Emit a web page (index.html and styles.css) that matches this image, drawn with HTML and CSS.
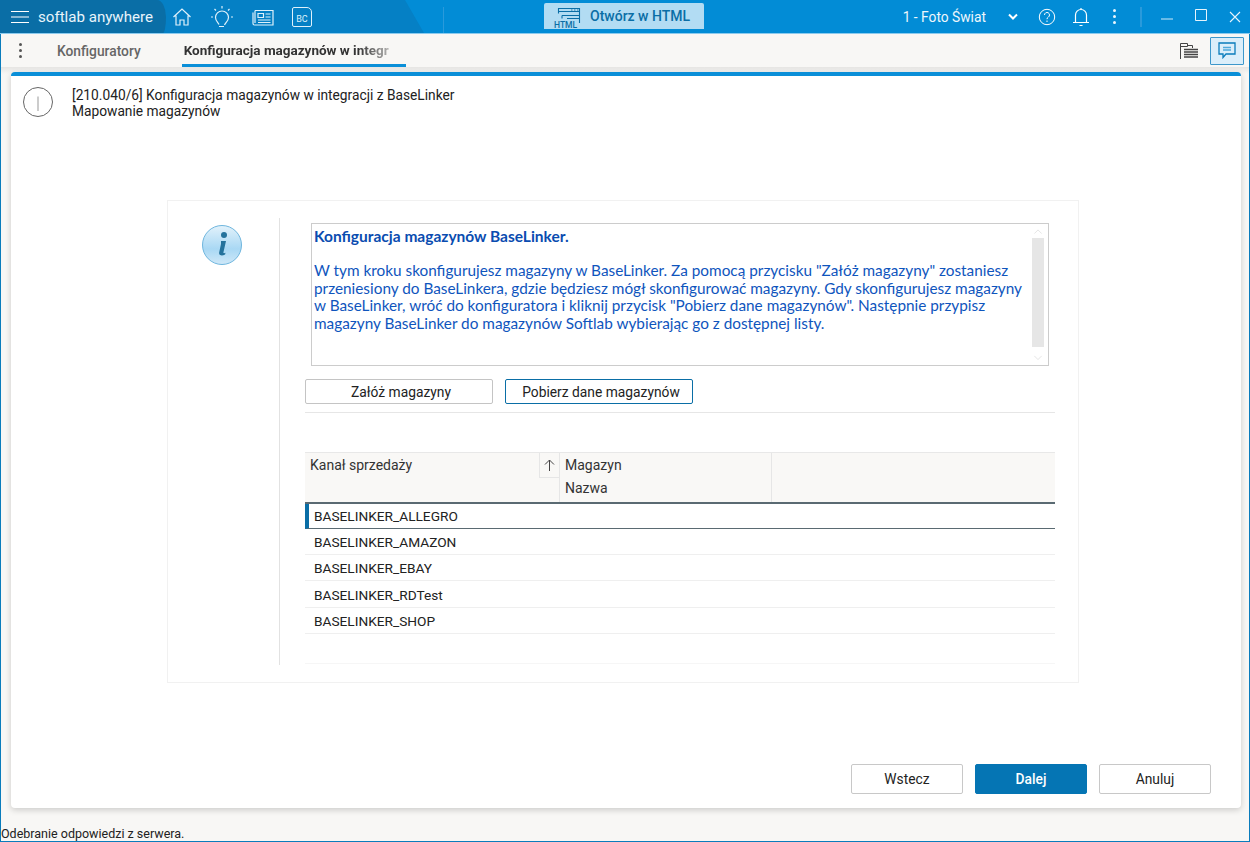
FILE: index.html
```html
<!DOCTYPE html>
<html lang="pl">
<head>
<meta charset="utf-8">
<title>softlab anywhere</title>
<link rel="stylesheet" href="styles.css">
</head>
<body>
<div class="app">
  <header class="titlebar">
    <div class="brand">
      <svg class="ic-menu" width="20" height="14" viewBox="0 0 20 14"><path d="M1 1.500h18M1 7h18M1 12.500h18" stroke="#fff" stroke-width="1.200" fill="none"/></svg>
      <span class="brand-name">softlab anywhere</span>
    </div>
    <nav class="quick">
      <svg width="20" height="20" viewBox="0 0 20 20" fill="none" stroke="#dff1fb" stroke-width="1.200"><path d="M1.500 10 10 2l8.500 8M4 8.500V18h4v-5h4v5h4V8.500"/></svg>
      <svg width="24" height="22" viewBox="0 0 24 22" fill="none" stroke="#dff1fb" stroke-width="1.200"><path d="M9 18.500c-.5-2-3.500-3.500-3.500-7a6.500 6.500 0 1 1 13 0c0 3.500-3 5-4 7.500"/><path d="M9 20.500h5M12 0v2.500M4.500 3 6 4.500M19.500 3 18 4.500M1 11h2M21 11h2"/></svg>
      <svg width="22" height="18" viewBox="0 0 22 18" fill="none" stroke="#dff1fb" stroke-width="1.200"><path d="M3 2.500h18v14.500H2.500a1.500 1.500 0 0 1-1.500-1.500V4.500M3 2.500V15"/><path d="M6 5.500h5.500v4H6zM13.500 6h5M13.500 9h5M6 12h12.500M6 14.500h12.500"/></svg>
      <span class="bc-icon"><span>BC</span></span>
    </nav>
    <div class="title-center">
      <button class="html-btn">
        <svg width="28" height="26" viewBox="0 0 28 26" fill="none" stroke="#0a6ea6" stroke-width="1.100"><path d="M5.500 10.500v-5h21V20M5.500 8.500h21M9 12.500h17.500M9 12.500v3M14 15.500h12.500"/><path d="M18 7h1.500M21 7h1.500M24 7h1.500" stroke-width=".9"/><text x="1" y="24.500" class="html-tag">HTML</text></svg>
        <span>Otwórz w HTML</span>
      </button>
    </div>
    <div class="title-right">
      <span class="company">1 - Foto Świat</span>
      <svg class="chev" width="10" height="7" viewBox="0 0 10 7"><path d="M1 1.500 5 5.500l4-4" fill="none" stroke="#fff" stroke-width="2"/></svg>
      <svg class="help" width="18" height="18" viewBox="0 0 18 18" fill="none" stroke="#fff" stroke-width="1"><circle cx="9" cy="9" r="7.700"/><path d="M6.500 7a2.500 2.500 0 1 1 3.800 2.100c-.9.600-1.300 1-1.300 2.100M9 12.500v1.500"/></svg>
      <svg class="bell" width="18" height="20" viewBox="0 0 18 20" fill="none" stroke="#fff" stroke-width="1.200"><path d="M3.500 15V8a5.500 5.500 0 0 1 11 0v7M1 15.500h16M7.500 18.500h3M9 1v1.500"/></svg>
      <span class="dots light"><i></i><i></i><i></i></span>
      <span class="sep"></span>
      <svg class="win min" width="12" height="12" viewBox="0 0 12 12"><path d="M0 11h12" stroke="#cfe9f8" stroke-width="1"/></svg>
      <svg class="win max" width="12" height="12" viewBox="0 0 12 12"><path d="M.5.500h11v11H.500z" fill="none" stroke="#e6f4fc" stroke-width="1"/></svg>
      <svg class="win cls" width="12" height="12" viewBox="0 0 12 12"><path d="M1 1l10 10M11 1 1 11" stroke="#e6f4fc" stroke-width="1.100"/></svg>
    </div>
  </header>

  <div class="tabbar">
    <span class="dots dark"><i></i><i></i><i></i></span>
    <a class="tab">Konfiguratory</a>
    <a class="tab active"><span>Konfiguracja magazynów w integr</span></a>
    <div class="tab-tools">
      <svg width="20" height="18" viewBox="0 0 20 18" fill="none" stroke="#444" stroke-width="1"><path d="M1.500 17V1.500h7v3H1.500M8.500 3.500h5v2.500"/><path d="M5 7.500h14M5 10h14M5 12.500h14M5 15h14" stroke-width="1.300"/></svg>
      <span class="chat-btn">
        <svg width="18" height="17" viewBox="0 0 18 17" fill="none" stroke="#0a7cbc" stroke-width="1.300"><path d="M1 1h16v11H8l-3 3.500V12H1z"/><path d="M5 5.500h8M5 8h8" stroke="#4fa9db" stroke-width="1.500"/></svg>
      </span>
    </div>
  </div>

  <main class="workspace">
    <section class="card">
      <div class="card-head">
        <svg width="32" height="32" viewBox="0 0 32 32" fill="none"><circle cx="16" cy="16" r="14.500" stroke="#666" stroke-width="1"/><path d="M16 10.500V25" stroke="#999" stroke-width="1"/></svg>
        <div class="card-title">
          <div>[210.040/6] Konfiguracja magazynów w integracji z BaseLinker</div>
          <div>Mapowanie magazynów</div>
        </div>
      </div>
      <div class="card-body">
        <div class="panel">
          <div class="panel-side">
            <svg width="42" height="42" viewBox="0 0 42 42">
              <defs>
                <linearGradient id="ig" x1="0" y1="0" x2="0" y2="1"><stop offset="0" stop-color="#e3f2fb"/><stop offset=".6" stop-color="#a9d8f4"/><stop offset="1" stop-color="#cfe8f8"/></linearGradient>
              </defs>
              <circle cx="21" cy="21" r="19.500" fill="url(#ig)" stroke="#6fb6de" stroke-width="1"/>
              <circle cx="23" cy="11" r="3" fill="#24729c"/>
              <path d="M20 17h5l-2.500 11c-.3 1.300.5 1.500 2 .8l-.4 1.700c-3 1.500-6.300 1.200-6-1.800L20 20z" fill="#24729c"/>
            </svg>
          </div>
          <div class="panel-main">
            <div class="note">
              <div class="note-text">
                <p class="note-title">Konfiguracja magazynów BaseLinker.</p>
                <p>W tym kroku skonfigurujesz magazyny w BaseLinker. Za pomocą przycisku "Załóż magazyny" zostaniesz<br>przeniesiony do BaseLinkera, gdzie będziesz mógł skonfigurować magazyny. Gdy skonfigurujesz magazyny<br>w BaseLinker, wróć do konfiguratora i kliknij przycisk "Pobierz dane magazynów". Następnie przypisz<br>magazyny BaseLinker do magazynów Softlab wybierając go z dostępnej listy.</p>
              </div>
              <div class="scroll">
                <svg width="10" height="6" viewBox="0 0 10 6"><path d="M1 5l4-4 4 4" fill="none" stroke="#e2e2e2"/></svg>
                <span class="thumb"></span>
                <svg width="10" height="6" viewBox="0 0 10 6"><path d="M1 1l4 4 4-4" fill="none" stroke="#e2e2e2"/></svg>
              </div>
            </div>
            <div class="actions">
              <button class="btn">Załóż magazyny</button>
              <button class="btn focus">Pobierz dane magazynów</button>
            </div>
            <div class="grid">
              <div class="grid-head">
                <div class="col-a">
                  <div class="col-a-label">Kanał sprzedaży</div>
                  <div class="sort"><svg width="11" height="12" viewBox="0 0 11 12"><path d="M5.500 12V1M1 5.500 5.500 1 10 5.500" fill="none" stroke="#444" stroke-width="1"/></svg></div>
                </div>
                <div class="col-b"><div>Magazyn</div><div>Nazwa</div></div>
                <div class="col-c"></div>
              </div>
              <div class="row selected">BASELINKER_ALLEGRO</div>
              <div class="row">BASELINKER_AMAZON</div>
              <div class="row">BASELINKER_EBAY</div>
              <div class="row tall">BASELINKER_RDTest</div>
              <div class="row">BASELINKER_SHOP</div>
              <div class="grid-end"></div>
            </div>
          </div>
        </div>
      </div>
      <div class="card-foot">
        <button class="fbtn">Wstecz</button>
        <button class="fbtn primary">Dalej</button>
        <button class="fbtn">Anuluj</button>
      </div>
    </section>
  </main>
  <footer class="status">Odebranie odpowiedzi z serwera.</footer>
</div>
</body>
</html>
```

FILE: styles.css
```css
* { box-sizing: border-box; }
html, body { margin: 0; padding: 0; }
body { font-family: Roboto, "Liberation Sans", sans-serif; color: #222; overflow: hidden; }
p { margin: 0; }
button { font-family: inherit; cursor: pointer; }

.app { width: 1250px; height: 842px; display: flex; flex-direction: column; background: #f8f7f5; border: 1px solid #0a7cbc; border-top: 0; }

.titlebar {
  height: 34px; margin: 0 -1px; flex: none; display: flex; align-items: center; color: #fff;
  border-bottom: 1px solid #8ccbee; position: relative;
  background: linear-gradient(#2a9adb, #2a9adb) no-repeat 443px 7px / 1px 26px, #028cd6;
}
.titlebar::before { content: ""; position: absolute; inset: 0; background: #0580c5; clip-path: polygon(0 0, 405px 0, 424px 100%, 0 100%); }
.titlebar > * { position: relative; }
.brand { width: 166px; align-self: stretch; display: flex; align-items: center; padding-left: 10px; flex: none; background: #0a6ea6; border-radius: 0 9px 3px 0 / 0 17px 16px 0; }
.brand-name { font-size: 15.100px; margin-left: 8px; color: #e8f4fb; white-space: nowrap; }
.quick { display: flex; align-items: center; width: 150px; margin-left: 6px; gap: 18px; flex: none; }
.bc-icon { width: 20px; height: 20px; border: 1.200px solid #dff1fb; border-radius: 2px 5px 2px 2px; font-size: 9px; display: flex; align-items: flex-end; justify-content: center; color: #dff1fb; padding-bottom: 2px; line-height: 1; flex: none; }
.title-center { width: 382px; display: flex; height: 100%; justify-content: flex-end; flex: none; }
.html-btn { width: 160px; height: 26px; margin-top: 3px; border: 0; border-radius: 2px 2px 0 0; background: #b2dcf3; color: #0a6ea6; font-size: 14px; font-weight: 500; display: flex; align-items: center; padding: 0 0 0 9px; gap: 9px; }
.html-tag { font: 500 8.500px Roboto, sans-serif; fill: #0a6ea6; stroke: none; }
.title-right { margin-left: auto; display: flex; align-items: center; flex: none; padding-right: 9px; height: 100%; }
.company { font-size: 13.800px; color: #eef7fc; white-space: nowrap; }
.chev { margin-left: 22px; }
.help { margin-left: 20px; }
.bell { margin-left: 16px; }
.dots { display: inline-flex; flex-direction: column; gap: 3px; width: 3px; }
.dots i { display: block; width: 3px; height: 3px; border-radius: 50%; }
.dots.light { margin-left: 23px; }
.dots.light i { background: #eaf6fd; }
.dots.dark i { background: #555; }
.sep { width: 2px; height: 20px; background: #2a9adb; margin-left: 24px; }
.win.min { margin-left: 19px; margin-top: -5px; }
.win.max { margin-left: 22px; margin-top: -3px; }
.win.cls { margin-left: 22px; }

.tabbar { height: 33px; flex: none; display: flex; align-items: stretch; position: relative; }
.tabbar .dots { align-self: center; margin-left: 18px; }
.tab { font-size: 13.800px; font-weight: 500; color: #666; display: flex; align-items: center; white-space: nowrap; }
.tabbar > .tab:nth-of-type(1) { margin-left: 35px; }
.tab.active { margin-left: 41px; width: 224px; padding-left: 2px; color: #333; font-size: 13.500px; font-weight: 700; border-bottom: 3px solid #0a8fd8; padding-top: 2px; }
.tab.active span { -webkit-mask-image: linear-gradient(90deg, #000 85%, rgba(0,0,0,.35) 100%); mask-image: linear-gradient(90deg, #000 85%, rgba(0,0,0,.35) 100%); }
.tab-tools { margin-left: auto; display: flex; align-items: center; gap: 11px; padding-right: 5px; }
.chat-btn { width: 34px; height: 28px; background: #dbeefa; border: 1px solid #3c97cb; border-radius: 1px; display: flex; align-items: center; justify-content: center; }

.workspace { flex: 1; min-height: 0; padding: 5px 8px 0 10px; display: flex; flex-direction: column; background: linear-gradient(#e6e5e3, #f6f5f3 6px, #f8f7f5 8px); }
.card { height: 736px; flex: none; background: #fff; border-top: 4px solid #0a8fd8; border-radius: 4px; box-shadow: 0 2px 6px rgba(0,0,0,.18); display: flex; flex-direction: column; }
.card-head { height: 40px; flex: none; display: flex; padding: 10px 0 0 11px; }
.card-title { font-size: 13.750px; line-height: 16px; margin-left: 18px; margin-top: 1px; color: #222; }
.card-body { height: 628px; flex: none; padding: 84px 0 0 156px; }
.panel { width: 912px; height: 483px; border: 1px solid #f1f1f1; display: flex; padding: 17px 23px 17px 0; }
.panel-side { width: 112px; border-right: 1px solid #e2e2e2; flex: none; display: flex; justify-content: center; padding: 6px 4px 0 0; align-items: flex-start; }
.panel-main { flex: 1; min-width: 0; padding: 5px 0 0 25px; display: flex; flex-direction: column; }
.note { margin-left: 6px; width: 738px; height: 143px; border: 1px solid #cccccc; display: flex; flex: none; }
.note-text { flex: 1; padding: 4px 0 0 2px; font-family: Lato, "Open Sans", sans-serif; font-size: 15.330px; line-height: 17.400px; color: #0f55bd; white-space: nowrap; }
.note-title { font-weight: 700; font-size: 15.500px; margin-bottom: 17px; color: #0a4cb0; }
.scroll { width: 12px; margin-right: 4px; display: flex; flex-direction: column; align-items: center; padding: 5px 0; flex: none; }
.thumb { width: 12px; height: 109px; background: #e6e6e6; margin: 3px 0 8px; flex: none; }
.actions { display: flex; gap: 12px; margin-top: 13px; padding-bottom: 8px; border-bottom: 1px solid #e6e6e6; height: 34px; flex: none; }
.btn { width: 188px; height: 25px; background: #fff; border: 1px solid #c4c4c4; border-radius: 2px; font-size: 13.800px; color: #222; padding: 0 0 0 4px; }
.btn.focus { border-color: #0a6ea6; }

.grid { margin-top: 39px; font-size: 13.700px; display: flex; flex-direction: column; }
.grid-head { height: 52px; display: flex; background: #f9f8f6; border-top: 1px solid #e8e8e8; border-bottom: 2px solid #5a6a72; flex: none; font-size: 14px; }
.col-a { width: 255px; display: flex; border-right: 1px solid #e6e6e6; flex: none; }
.col-a-label { flex: 1; padding: 4px 0 0 5px; line-height: 16px; color: #333; }
.sort { width: 20px; height: 25px; border-left: 1px solid #e6e6e6; border-bottom: 1px solid #e6e6e6; display: flex; align-items: center; justify-content: center; flex: none; }
.col-b { width: 212px; padding: 1px 0 0 5px; border-right: 1px solid #e6e6e6; line-height: 23px; color: #333; flex: none; }
.col-c { flex: 1; }
.row { height: 26px; padding: 1px 0 0 9px; display: flex; align-items: center; border-bottom: 1px solid #efefef; color: #222; }
.row.tall { height: 27px; }
.row.selected { height: 25px; padding: 0 0 0 5px; border-left: 4px solid #0a6ea6; border-bottom: 1px solid #5a6a72; }
.grid-end { height: 30px; border-bottom: 1px solid #f6f6f6; }

.card-foot { flex: 1; display: flex; justify-content: flex-end; gap: 12px; padding: 20px 30px 0 0; }
.fbtn { width: 112px; height: 30px; background: #fff; border: 1px solid #c8c8c8; border-radius: 2px; font-size: 13.800px; color: #222; padding: 0; }
.fbtn.primary { background: #0575b4; border-color: #0575b4; color: #fff; font-weight: 500; }

.status { height: 14px; flex: none; font-size: 12.500px; line-height: 13px; color: #222; background: #f8f7f5; }
```
